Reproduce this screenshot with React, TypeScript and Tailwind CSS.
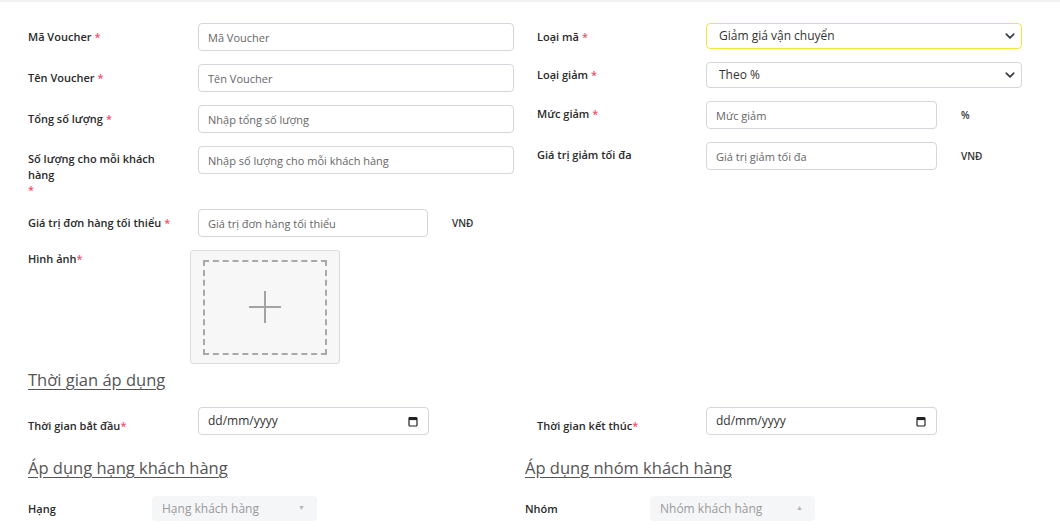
import type { ReactNode } from 'react'

const font = { fontFamily: '"Open Sans", "Noto Sans", sans-serif' }

function Star() {
  return <span className="ml-[3px] text-[#f0506e]">*</span>
}

function Label({ children, className = '' }: { children: ReactNode; className?: string }) {
  return (
    <div className={`shrink-0 text-[11px] font-semibold leading-4 text-[#2a2a2a] ${className}`}>{children}</div>
  )
}

function TextInput({ placeholder, width = 'w-[316px]' }: { placeholder: string; width?: string }) {
  return (
    <input
      placeholder={placeholder}
      style={font}
      className={`h-[28px] ${width} shrink-0 rounded-[4px] border border-[#d3d6da] bg-white px-[9px] text-[11px] text-[#444] outline-none placeholder:text-[#666]`}
    />
  )
}

function Chevron() {
  return (
    <svg width="12" height="10" viewBox="0 0 16 16" fill="none">
      <path d="m2 5 6 6 6-6" stroke="#343a40" strokeWidth="2.6" strokeLinecap="round" strokeLinejoin="round" />
    </svg>
  )
}

function SelectBox({ value, highlight = false }: { value: string; highlight?: boolean }) {
  return (
    <div
      className={`flex h-[26px] w-[316px] shrink-0 items-center justify-between rounded-[4px] border bg-white pl-[12px] pr-[5px] text-[12px] text-[#333] ${
        highlight ? 'border-[#f2e63a]' : 'border-[#d3d6da]'
      }`}
    >
      <span>{value}</span>
      <Chevron />
    </div>
  )
}

function CalendarIcon() {
  return (
    <svg width="10" height="11" viewBox="0 0 10 11" fill="none">
      <rect x="1" y="1.5" width="8" height="8.5" rx="1" stroke="#222" strokeWidth="1.2" />
      <rect x="1" y="1.5" width="8" height="2.6" fill="#222" />
    </svg>
  )
}

function DateInput() {
  return (
    <div className="flex h-[28px] w-[231px] shrink-0 items-center justify-between rounded-[4px] border border-[#d3d6da] bg-white pl-[9px] pr-[10px] text-[12px] text-[#333]">
      <span>dd/mm/yyyy</span>
      <CalendarIcon />
    </div>
  )
}

function GraySelect({ placeholder, up = false }: { placeholder: string; up?: boolean }) {
  return (
    <div className="flex h-[25px] w-[165px] shrink-0 items-center justify-between rounded-[4px] bg-[#f5f6f8] pl-[10px] pr-[12px] text-[12px] text-[#9a9a9a]">
      <span>{placeholder}</span>
      <span className="text-[7px] text-[#b5b5b5]">{up ? '▲' : '▼'}</span>
    </div>
  )
}

function Heading({ children }: { children: ReactNode }) {
  return <h3 className="text-[16.5px] leading-6 text-[#555] underline underline-offset-[3px]">{children}</h3>
}

export default function App() {
  return (
    <div style={font} className="h-[530px] w-[1060px] overflow-hidden border-t-2 border-[#f0f1f2] bg-white">
      <div className="flex pt-[21px]">
        {/* left column */}
        <div className="flex w-[514px] shrink-0 flex-col gap-[13px] pl-[28px]">
          <div className="flex">
            <Label className="w-[170px] pt-[6px]">
              Mã Voucher<Star />
            </Label>
            <TextInput placeholder="Mã Voucher" />
          </div>
          <div className="flex">
            <Label className="w-[170px] pt-[6px]">
              Tên Voucher<Star />
            </Label>
            <TextInput placeholder="Tên Voucher" />
          </div>
          <div className="flex">
            <Label className="w-[170px] pt-[6px]">
              Tổng số lượng<Star />
            </Label>
            <TextInput placeholder="Nhập tổng số lượng" />
          </div>
          <div className="flex">
            <Label className="w-[170px] pt-[5px]">
              <div className="w-[140px]">Số lượng cho mỗi khách hàng</div>
              <div className="leading-[13px] text-[#f0506e]">*</div>
            </Label>
            <TextInput placeholder="Nhập số lượng cho mỗi khách hàng" />
          </div>
          <div className="flex">
            <Label className="w-[170px] pt-[6px]">
              Giá trị đơn hàng tối thiểu<Star />
            </Label>
            <TextInput placeholder="Giá trị đơn hàng tối thiểu" width="w-[230px]" />
            <span className="ml-[24px] pt-[6px] text-[10px] font-semibold leading-4 text-[#333]">VNĐ</span>
          </div>
          <div className="flex">
            <Label className="w-[162px] pt-[1px]">
              Hình ảnh<span className="text-[#f0506e]">*</span>
            </Label>
            <div className="flex h-[114px] w-[150px] items-center justify-center rounded-[3px] border border-[#dcdcdc] bg-[#f7f7f7]">
              <div className="flex h-[95px] w-[124px] items-center justify-center border-2 border-dashed border-[#a9a9a9]">
                <svg width="34" height="34" viewBox="0 0 34 34">
                  <path d="M17 1v32M1 17h32" stroke="#a3a3a3" strokeWidth="2" />
                </svg>
              </div>
            </div>
          </div>
        </div>

        {/* right column */}
        <div className="ml-[23px] flex flex-col gap-[13px]">
          <div className="flex">
            <Label className="w-[169px] pt-[6px]">
              Loại mã<Star />
            </Label>
            <SelectBox value="Giảm giá vận chuyển" highlight />
          </div>
          <div className="flex">
            <Label className="w-[169px] pt-[5px]">
              Loại giảm<Star />
            </Label>
            <SelectBox value="Theo %" />
          </div>
          <div className="flex">
            <Label className="w-[169px] pt-[5px]">
              Mức giảm<Star />
            </Label>
            <TextInput placeholder="Mức giảm" width="w-[231px]" />
            <span className="ml-[24px] pt-[6px] text-[10px] font-semibold leading-4 text-[#333]">%</span>
          </div>
          <div className="flex">
            <Label className="w-[169px] pt-[5px]">Giá trị giảm tối đa</Label>
            <TextInput placeholder="Giá trị giảm tối đa" width="w-[231px]" />
            <span className="ml-[24px] pt-[6px] text-[10px] font-semibold leading-4 text-[#333]">VNĐ</span>
          </div>
        </div>
      </div>

      <div className="mt-[4px] pl-[28px]">
        <Heading>Thời gian áp dụng</Heading>
      </div>

      <div className="mt-[15px] flex">
        <div className="flex w-[514px] shrink-0 pl-[28px]">
          <Label className="w-[170px] pt-[11px]">
            Thời gian bắt đầu<span className="text-[#f0506e]">*</span>
          </Label>
          <DateInput />
        </div>
        <div className="ml-[23px] flex">
          <Label className="w-[169px] pt-[11px]">
            Thời gian kết thúc<span className="text-[#f0506e]">*</span>
          </Label>
          <DateInput />
        </div>
      </div>

      <div className="mt-[21px] flex">
        <div className="w-[525px] shrink-0 pl-[28px]">
          <Heading>Áp dụng hạng khách hàng</Heading>
        </div>
        <Heading>Áp dụng nhóm khách hàng</Heading>
      </div>

      <div className="mt-[16px] flex">
        <div className="flex w-[525px] shrink-0 items-center pl-[28px]">
          <Label className="w-[124px]">Hạng</Label>
          <GraySelect placeholder="Hạng khách hàng" />
        </div>
        <div className="flex items-center">
          <Label className="w-[125px]">Nhóm</Label>
          <GraySelect placeholder="Nhóm khách hàng" up />
        </div>
      </div>
    </div>
  )
}
